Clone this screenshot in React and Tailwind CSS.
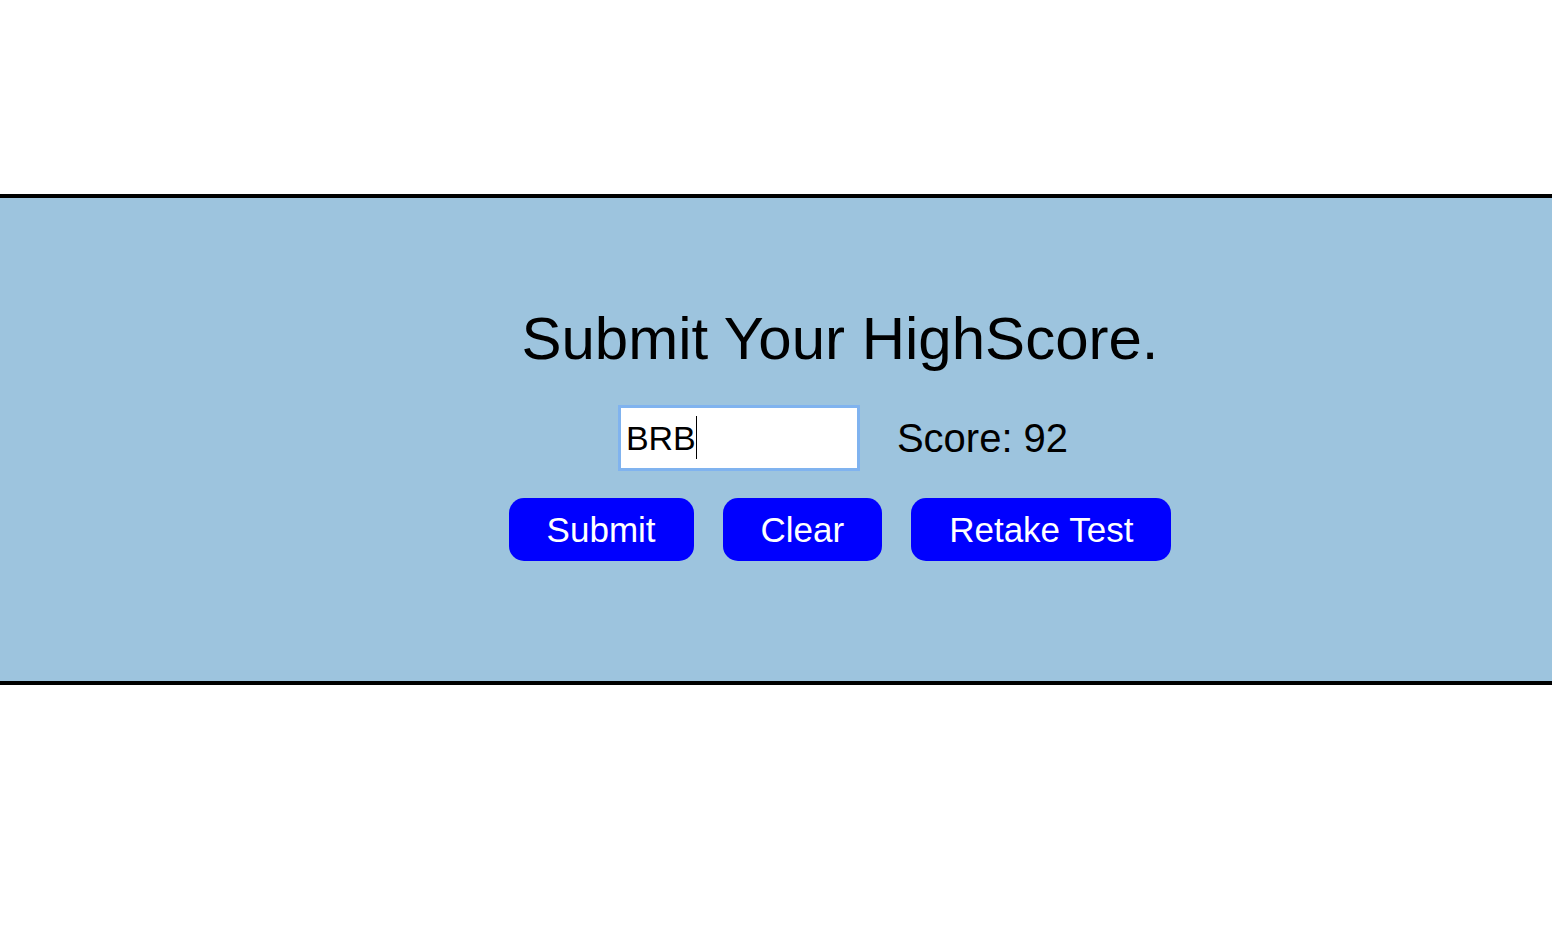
import { useEffect, useRef, useState } from "react";

const App = () => {
  const [name, setName] = useState("BRB");
  const inputRef = useRef(null);

  useEffect(() => {
    const el = inputRef.current;
    if (el) {
      el.focus();
      el.setSelectionRange(el.value.length, el.value.length);
    }
  }, []);

  const btn = "h-[63px] px-[38px] rounded-[15px] bg-[#0000ff] text-white text-[35px] leading-none";

  return (
    <div className="min-h-screen bg-white pt-[194px] font-['Liberation_Sans',Arial,sans-serif]">
      {/* HighScore panel */}
      <section className="border-y-4 border-black bg-[#9dc4de] pl-[128px] pt-[107px] pb-[120px]">
        <div className="flex flex-col items-center">
          <h1 className="text-[60px] leading-[67px] text-black">Submit Your HighScore.</h1>

          <div className="mt-[33px] flex items-center gap-[37px] translate-x-[3px]">
            <div className="relative">
              <input
                ref={inputRef}
                value={name}
                onChange={e => setName(e.target.value)}
                className="w-[242px] h-[66px] bg-white border-[3px] border-[#80b3ef] px-[5px] text-[34px] text-black outline-none caret-transparent"
              />
              {/* text caret */}
              <span className="absolute left-[78px] top-[11px] h-[43px] w-px bg-black pointer-events-none" />
            </div>
            <p className="text-[40px] text-black">Score: 92</p>
          </div>

          <div className="mt-[27px] flex items-center gap-[29px]">
            <button className={btn}>Submit</button>
            <button className={btn}>Clear</button>
            <button className={btn}>Retake Test</button>
          </div>
        </div>
      </section>
    </div>
  );
};

export default App;
